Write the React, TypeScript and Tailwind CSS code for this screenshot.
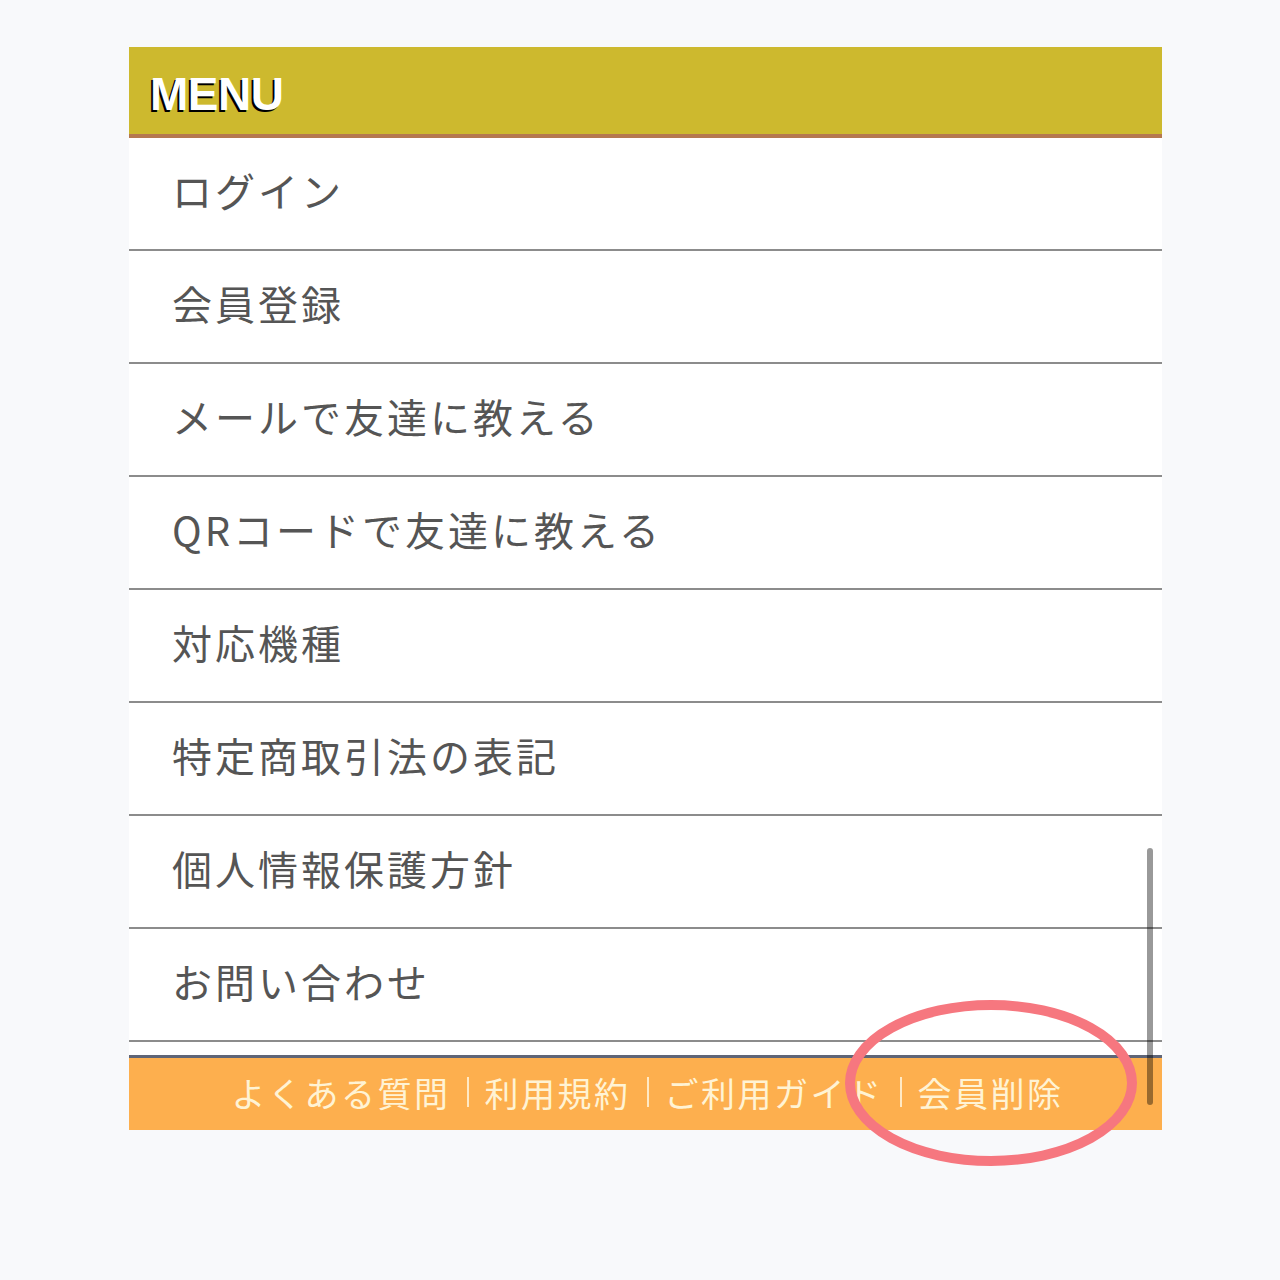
import React from "react"

const items = [
  "ログイン",
  "会員登録",
  "メールで友達に教える",
  "QRコードで友達に教える",
  "対応機種",
  "特定商取引法の表記",
  "個人情報保護方針",
  "お問い合わせ",
]

const links = ["よくある質問", "利用規約", "ご利用ガイド", "会員削除"]

const App = () => {
  return (
    <div className="min-h-[1280px] w-full bg-[#f8f9fb] pt-[47px] font-['Noto_Sans_CJK_JP',sans-serif]">
      <div className="relative ml-[129px] w-[1033px]">
        <div className="flex h-[91px] items-center border-b-4 border-[#b5784f] bg-[#cdb92e] pl-[21px] pt-[8px]">
          <span className="font-['Liberation_Sans',Arial,sans-serif] text-[46px] font-bold tracking-[-0.5px] text-white [text-shadow:-2px_2px_0_#000]">
            MENU
          </span>
        </div>
        <div className="bg-white">
          {items.map((item) => (
            <div
              key={item}
              className="flex h-[113px] items-center border-b-2 border-[#8c8c8c] pb-[8px] pl-[43px] text-[40px] tracking-[3px] text-[#555]"
            >
              {item}
            </div>
          ))}
          <div className="h-[13px]" />
        </div>
        <div className="flex h-[75px] items-center justify-center border-t-[3px] border-[#5f6577] bg-[#fdaf4e] pb-[4px] pl-[4px] text-[34px] tracking-[2.5px] text-[#fff3d4]">
          {links.map((link, i) => (
            <React.Fragment key={link}>
              {i > 0 && <span className="mx-[16px] h-[30px] w-[2px] bg-[#ffe9c4]" />}
              <span>{link}</span>
            </React.Fragment>
          ))}
        </div>
        {/* scrollbar */}
        <div className="absolute left-[1018px] top-[801px] h-[257px] w-[6px] rounded-full bg-black/40" />
        {/* annotation ring */}
        <svg
          className="absolute left-[716px] top-[953px]"
          width="292"
          height="166"
          viewBox="0 0 292 166"
        >
          <ellipse cx="146" cy="83" rx="141" ry="78" fill="none" stroke="#f6777f" strokeWidth="10" />
        </svg>
      </div>
    </div>
  )
}

export default App
